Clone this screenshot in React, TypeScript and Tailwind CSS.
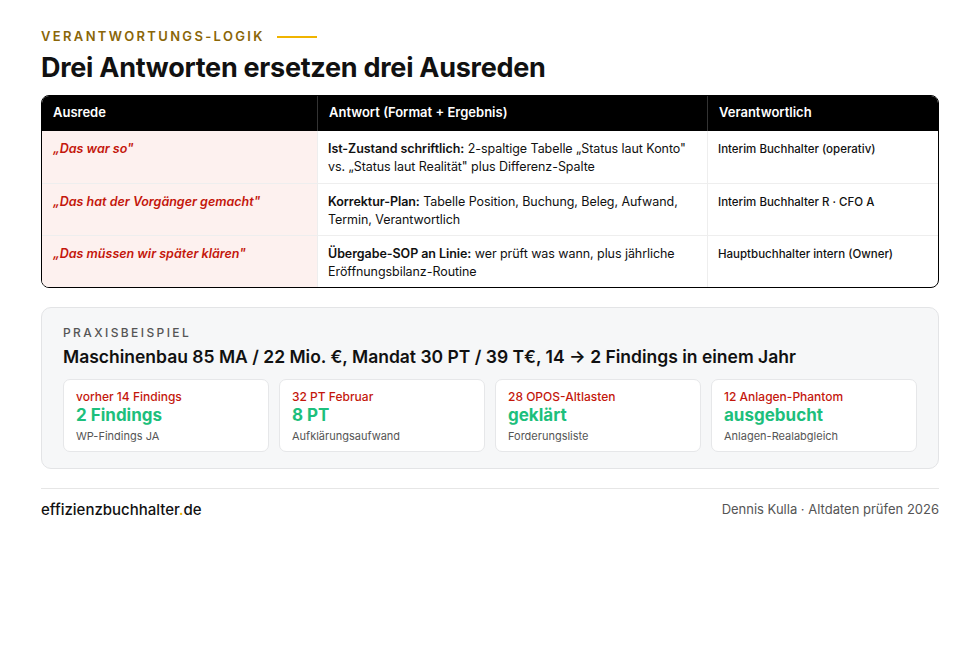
export default function App() {
  const rows = [
    {
      a: '„Das war so"',
      b: 'Ist-Zustand schriftlich:',
      c: ' 2-spaltige Tabelle „Status laut Konto" vs. „Status laut Realität" plus Differenz-Spalte',
      d: 'Interim Buchhalter (operativ)',
    },
    {
      a: '„Das hat der Vorgänger gemacht"',
      b: 'Korrektur-Plan:',
      c: ' Tabelle Position, Buchung, Beleg, Aufwand, Termin, Verantwortlich',
      d: 'Interim Buchhalter R · CFO A',
    },
    {
      a: '„Das müssen wir später klären"',
      b: 'Übergabe-SOP an Linie:',
      c: ' wer prüft was wann, plus jährliche Eröffnungsbilanz-Routine',
      d: 'Hauptbuchhalter intern (Owner)',
    },
  ];
  const cards = [
    { top: 'vorher 14 Findings', big: '2 Findings', sub: 'WP-Findings JA' },
    { top: '32 PT Februar', big: '8 PT', sub: 'Aufklärungsaufwand' },
    { top: '28 OPOS-Altlasten', big: 'geklärt', sub: 'Forderungsliste' },
    { top: '12 Anlagen-Phantom', big: 'ausgebucht', sub: 'Anlagen-Realabgleich' },
  ];
  return (
    <div className="w-[980px] h-[653px] bg-white px-[41px] pt-[27px] text-[#111]" style={{ fontFamily: 'Inter, "Noto Sans", sans-serif' }}>
      <div className="flex items-center gap-3">
        <span className="text-[13px] font-semibold tracking-[0.18em] text-[#8a6608]">VERANTWORTUNGS-LOGIK</span>
        <span className="block w-[40px] h-[2px] bg-[#f0b400]" />
      </div>
      <h1 className="mt-[4px] text-[27px] font-bold leading-[34px] tracking-[-0.01em]">Drei Antworten ersetzen drei Ausreden</h1>
      <div className="mt-[10px] rounded-[8px] border-[1.5px] border-black overflow-hidden">
        <div className="grid grid-cols-[275px_390px_1fr] bg-black text-white text-[13px] font-semibold h-[35px] items-center">
          <div className="px-[11px]">Ausrede</div>
          <div className="px-[11px] border-l border-[#333] h-full flex items-center">Antwort (Format + Ergebnis)</div>
          <div className="px-[11px] border-l border-[#333] h-full flex items-center">Verantwortlich</div>
        </div>
        {rows.map((r, i) => (
          <div key={i} className={`grid grid-cols-[275px_390px_1fr] h-[52px] text-[12.5px] leading-[18px] ${i > 0 ? 'border-t border-[#eee]' : ''}`}>
            <div className="bg-[#fdf1ef] px-[11px] pt-[9px] italic font-semibold text-[#c4170c]">{r.a}</div>
            <div className="px-[10px] pt-[9px] border-l border-[#eee] tracking-[-0.005em]">
              <span className="font-semibold">{r.b}</span>
              {r.c}
            </div>
            <div className="px-[10px] pt-[9px] border-l border-[#eee] text-[11.5px] font-medium">{r.d}</div>
          </div>
        ))}
      </div>
      <div className="mt-[19px] rounded-[10px] border border-[#e3e4e6] bg-[#f6f7f8] px-[21px] pt-[17px] pb-[16px]">
        <div className="text-[12px] font-medium tracking-[0.2em] text-[#555] leading-[16px]">PRAXISBEISPIEL</div>
        <div className="mt-[4px] text-[17.5px] font-semibold leading-[24px]">Maschinenbau 85 MA / 22 Mio. €, Mandat 30 PT / 39 T€, 14 → 2 Findings in einem Jahr</div>
        <div className="mt-[10px] grid grid-cols-4 gap-[10px]">
          {cards.map((c) => (
            <div key={c.top} className="bg-white rounded-[7px] border border-[#e6e7e9] px-[12px] pt-[9px] pb-[9px] h-[73px]">
              <div className="text-[12px] font-medium text-[#c4170c] leading-[15px]">{c.top}</div>
              <div className="text-[17px] font-bold text-[#1dbf7c] leading-[22px]">{c.big}</div>
              <div className="text-[11px] text-[#555] leading-[16px] mt-[2px]">{c.sub}</div>
            </div>
          ))}
        </div>
      </div>
      <div className="mt-[19px] border-t border-[#e6e6e6] pt-[10px] flex justify-between items-center">
        <div className="text-[15px] font-medium">
          effizienzbuchhalter<span className="text-[#f0b400]">.</span>de
        </div>
        <div className="text-[13px] text-[#555]">Dennis Kulla · Altdaten prüfen 2026</div>
      </div>
    </div>
  );
}
